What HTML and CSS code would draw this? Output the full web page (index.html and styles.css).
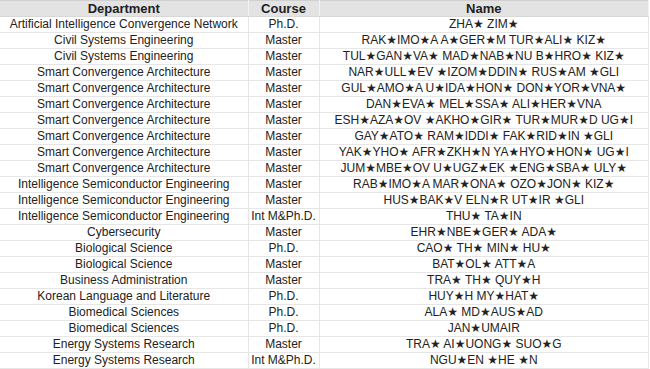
FILE: index.html
```html
<!DOCTYPE html>
<html lang="en">
<head>
  <meta charset="UTF-8">
  <title>Admitted Students</title>
  <link rel="stylesheet" href="styles.css">
</head>
<body>
  <table class="list">
    <colgroup>
      <col class="col-dept">
      <col class="col-course">
      <col class="col-name">
    </colgroup>
    <thead>
      <tr>
        <th>Department</th>
        <th>Course</th>
        <th>Name</th>
      </tr>
    </thead>
    <tbody>
      <tr><td>Artificial Intelligence Convergence Network</td><td>Ph.D.</td><td>ZHA★ ZIM★</td></tr>
      <tr><td>Civil Systems Engineering</td><td>Master</td><td>RAK★IMO★A A★GER★M TUR★ALI★ KIZ★</td></tr>
      <tr><td>Civil Systems Engineering</td><td>Master</td><td>TUL★GAN★VA★ MAD★NAB★NU B★HRO★ KIZ★</td></tr>
      <tr><td>Smart Convergence Architecture</td><td>Master</td><td>NAR★ULL★EV ★IZOM★DDIN★ RUS★AM ★GLI</td></tr>
      <tr><td>Smart Convergence Architecture</td><td>Master</td><td>GUL★AMO★A U★IDA★HON★ DON★YOR★VNA★</td></tr>
      <tr><td>Smart Convergence Architecture</td><td>Master</td><td>DAN★EVA★ MEL★SSA★ ALI★HER★VNA</td></tr>
      <tr><td>Smart Convergence Architecture</td><td>Master</td><td>ESH★AZA★OV ★AKHO★GIR★ TUR★MUR★D UG★I</td></tr>
      <tr><td>Smart Convergence Architecture</td><td>Master</td><td>GAY★ATO★ RAM★IDDI★ FAK★RID★IN ★GLI</td></tr>
      <tr><td>Smart Convergence Architecture</td><td>Master</td><td>YAK★YHO★ AFR★ZKH★N YA★HYO★HON★ UG★I</td></tr>
      <tr><td>Smart Convergence Architecture</td><td>Master</td><td>JUM★MBE★OV U★UGZ★EK ★ENG★SBA★ ULY★</td></tr>
      <tr><td>Intelligence Semiconductor Engineering</td><td>Master</td><td>RAB★IMO★A MAR★ONA★ OZO★JON★ KIZ★</td></tr>
      <tr><td>Intelligence Semiconductor Engineering</td><td>Master</td><td>HUS★BAK★V ELN★R UT★IR ★GLI</td></tr>
      <tr><td>Intelligence Semiconductor Engineering</td><td>Int M&amp;Ph.D.</td><td>THU★ TA★IN</td></tr>
      <tr><td>Cybersecurity</td><td>Master</td><td>EHR★NBE★GER★ ADA★</td></tr>
      <tr><td>Biological Science</td><td>Ph.D.</td><td>CAO★ TH★ MIN★ HU★</td></tr>
      <tr><td>Biological Science</td><td>Master</td><td>BAT★OL★ ATT★A</td></tr>
      <tr><td>Business Administration</td><td>Master</td><td>TRA★ TH★ QUY★H</td></tr>
      <tr><td>Korean Language and Literature</td><td>Ph.D.</td><td>HUY★H MY★HAT★</td></tr>
      <tr><td>Biomedical Sciences</td><td>Ph.D.</td><td>ALA★ MD★AUS★AD</td></tr>
      <tr><td>Biomedical Sciences</td><td>Ph.D.</td><td>JAN★UMAIR</td></tr>
      <tr><td>Energy Systems Research</td><td>Master</td><td>TRA★ AI★UONG★ SUO★G</td></tr>
      <tr><td>Energy Systems Research</td><td>Int M&amp;Ph.D.</td><td>NGU★EN ★HE ★N</td></tr>
    </tbody>
  </table>
</body>
</html>
```

FILE: styles.css
```css
/* Base */
body {
  margin: 0;
  padding: 0;
  background-color: #fff;
  font-family: "Liberation Sans", Arial, "DejaVu Sans", sans-serif;
  font-size: 12px;
  color: #222;
}

/* Table */
.list {
  width: 649px;
  border-collapse: collapse;
  table-layout: fixed;
}

.col-dept {
  width: 248px;
}

.col-course {
  width: 71px;
}

.list th,
.list td {
  padding: 0;
  height: 15px;
  line-height: 15px;
  text-align: center;
  white-space: nowrap;
  overflow: hidden;
  border-right: 1px solid #e6e6e6;
  border-bottom: 1px solid #e6e6e6;
}

.list th {
  background-color: #e3e3e3;
  border-top: 1px solid #cfcfcf;
  border-right-color: #f2f2f2;
  border-bottom-color: #d8d8d8;
  font-weight: bold;
  font-size: 13px;
  color: #1e1e1e;
}
```
